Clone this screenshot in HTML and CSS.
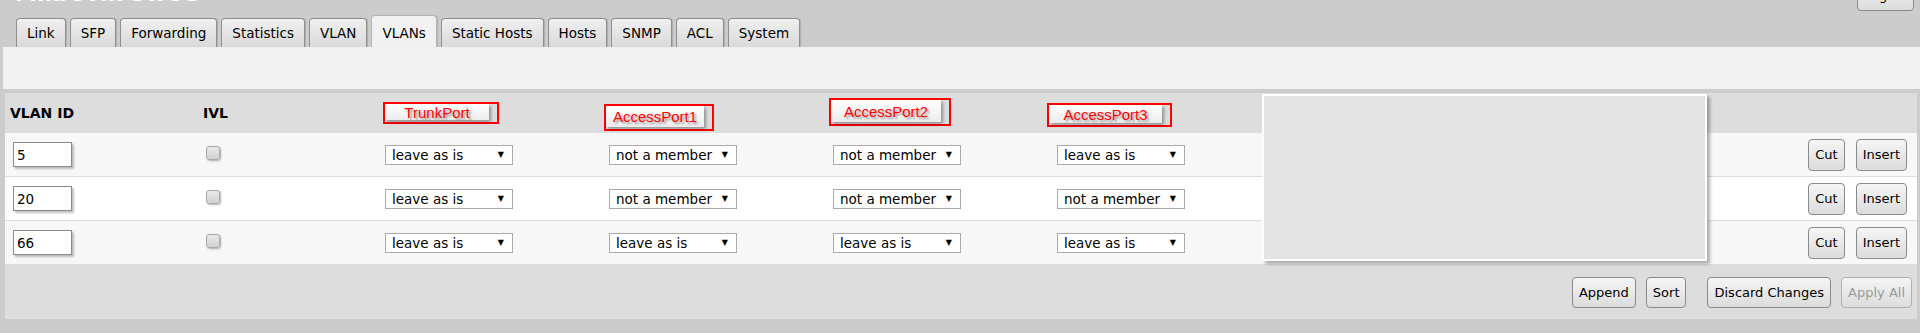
FILE: index.html
```html
<!DOCTYPE html>
<html lang="en">
<head>
    <meta charset="UTF-8">
    <meta name="viewport" content="width=device-width, initial-scale=1.0">
    <title>SwOS - VLANs</title>
    <link rel="stylesheet" href="styles.css">
</head>
<body>

    <!-- Header (page is scrolled a little) -->
    <div class="top">
        <span class="brand">MikroTik SwOS</span>
        <button class="btn logout">Logout</button>
    </div>

    <!-- Tabs -->
    <div class="tabs">
        <div class="tab">Link</div>
        <div class="tab">SFP</div>
        <div class="tab">Forwarding</div>
        <div class="tab">Statistics</div>
        <div class="tab">VLAN</div>
        <div class="tab active">VLANs</div>
        <div class="tab">Static Hosts</div>
        <div class="tab">Hosts</div>
        <div class="tab">SNMP</div>
        <div class="tab">ACL</div>
        <div class="tab">System</div>
    </div>

    <div class="toolbar"></div>

    <!-- VLAN table -->
    <div class="vlans">
        <div class="row head">
            <div class="cell">VLAN ID</div>
            <div class="cell">IVL</div>
            <div class="cell"><span class="port-label trunk"><span>TrunkPort</span></span></div>
            <div class="cell"><span class="port-label ap1"><span>AccessPort1</span></span></div>
            <div class="cell"><span class="port-label ap2"><span>AccessPort2</span></span></div>
            <div class="cell"><span class="port-label ap3"><span>AccessPort3</span></span></div>
            <div class="cell"></div>
        </div>

        <div class="row">
            <div class="cell"><input class="vid" type="text" value="5"></div>
            <div class="cell"><input class="check" type="checkbox"></div>
            <div class="cell"><div class="dropdown"><span>leave as is</span><span class="arrow">&#9660;</span></div></div>
            <div class="cell"><div class="dropdown"><span>not a member</span><span class="arrow">&#9660;</span></div></div>
            <div class="cell"><div class="dropdown"><span>not a member</span><span class="arrow">&#9660;</span></div></div>
            <div class="cell"><div class="dropdown"><span>leave as is</span><span class="arrow">&#9660;</span></div></div>
            <div class="cell actions"><button class="btn">Cut</button><button class="btn">Insert</button></div>
        </div>

        <div class="row">
            <div class="cell"><input class="vid" type="text" value="20"></div>
            <div class="cell"><input class="check" type="checkbox"></div>
            <div class="cell"><div class="dropdown"><span>leave as is</span><span class="arrow">&#9660;</span></div></div>
            <div class="cell"><div class="dropdown"><span>not a member</span><span class="arrow">&#9660;</span></div></div>
            <div class="cell"><div class="dropdown"><span>not a member</span><span class="arrow">&#9660;</span></div></div>
            <div class="cell"><div class="dropdown"><span>not a member</span><span class="arrow">&#9660;</span></div></div>
            <div class="cell actions"><button class="btn">Cut</button><button class="btn">Insert</button></div>
        </div>

        <div class="row">
            <div class="cell"><input class="vid" type="text" value="66"></div>
            <div class="cell"><input class="check" type="checkbox"></div>
            <div class="cell"><div class="dropdown"><span>leave as is</span><span class="arrow">&#9660;</span></div></div>
            <div class="cell"><div class="dropdown"><span>leave as is</span><span class="arrow">&#9660;</span></div></div>
            <div class="cell"><div class="dropdown"><span>leave as is</span><span class="arrow">&#9660;</span></div></div>
            <div class="cell"><div class="dropdown"><span>leave as is</span><span class="arrow">&#9660;</span></div></div>
            <div class="cell actions"><button class="btn">Cut</button><button class="btn">Insert</button></div>
        </div>

        <div class="footer">
            <button class="btn">Append</button>
            <button class="btn">Sort</button>
            <button class="btn wide-gap">Discard Changes</button>
            <button class="btn" disabled>Apply All</button>
        </div>

        <!-- blank popup lying over the table -->
        <div class="popup"></div>
    </div>

</body>
</html>
```

FILE: styles.css
```css
/* Global */
body {
    margin: 0;
    background: #cccccc;
    font-family: 'DejaVu Sans', Verdana, sans-serif;
    font-size: 13px;
    color: #000;
}

/* Header */
.top {
    height: 15px;
    display: flex;
    justify-content: space-between;
    align-items: flex-start;
    padding: 0 6px 0 15px;
}

.brand {
    margin-top: -17px;
    font-size: 22px;
    line-height: 22px;
    font-weight: bold;
    color: #ffffff;
}

.logout {
    margin-top: -21px;
    height: 30px;
    width: 57px;
}

/* Tabs */
.tabs {
    display: flex;
    align-items: flex-end;
    gap: 4px;
    height: 32px;
    padding-left: 16px;
}

.tab {
    height: 28px;
    line-height: 29px;
    padding: 0 10px;
    border: 1px solid #8f8f8f;
    border-bottom: none;
    border-radius: 4px 4px 0 0;
    background: linear-gradient(to bottom, #f0f0f0, #d9d9d9);
    box-shadow: 1px 0 1px rgba(0, 0, 0, 0.15);
    font-size: 13.5px;
}

.tab.active {
    height: 31px;
    line-height: 35px;
    background: #f1f1f1;
    border-color: #b5b5b5;
}

.toolbar {
    height: 42px;
    margin-left: 3px;
    background: #f1f1f1;
}

/* VLAN table */
.vlans {
    position: relative;
    margin: 4px 3px 14px 5px;
    background: #dddddd;
}

.row {
    display: grid;
    grid-template-columns: 193px 182px 224px 224px 224px 1fr auto;
    align-items: center;
    height: 43px;
    padding: 0 10px 0 5px;
    border-bottom: 1px solid #dddddd;
    background: #f7f7f7;
}

.row:nth-child(3) {
    background: #ffffff;
}

.row.head {
    height: 40px;
    border-bottom: none;
    background: #dddddd;
    font-size: 14px;
    font-weight: bold;
}

.vid {
    box-sizing: border-box;
    width: 59px;
    height: 25px;
    margin: 0 0 0 3px;
    padding: 0 3px;
    border: 1px solid #8a8a8a;
    box-shadow: 2px 2px 2px rgba(0, 0, 0, 0.25);
    font-family: inherit;
    font-size: 13.5px;
}

.check {
    appearance: none;
    width: 14px;
    height: 14px;
    margin: 0 0 0 3px;
    border: 1px solid #a8a8a8;
    border-radius: 3px;
    background: linear-gradient(to bottom, #e9e9e9, #d2d2d2);
    box-shadow: 1px 1px 2px rgba(0, 0, 0, 0.3);
}

.dropdown {
    box-sizing: border-box;
    width: 128px;
    height: 20px;
    display: flex;
    justify-content: space-between;
    align-items: center;
    padding: 0 8px 0 6px;
    border: 1px solid #a9a9a9;
    background: #ffffff;
    font-size: 13.5px;
}

.dropdown .arrow {
    font-size: 8px;
}

/* Annotated header labels */
.port-label {
    box-sizing: border-box;
    display: flex;
    align-self: start;
    border: 2px solid #ff0000;
    font-family: 'Liberation Sans', Arial, sans-serif;
    font-size: 15px;
    font-weight: normal;
    color: #ff0000;
}

.port-label span {
    flex: 1;
    display: flex;
    align-items: center;
    justify-content: center;
    margin: 0 8px 2px 0;
    background: linear-gradient(to bottom, #ffffff, #ececec);
    box-shadow: 2px 2px 3px rgba(0, 0, 0, 0.35);
    text-shadow: 2px 2px 2px rgba(0, 0, 0, 0.35);
}

.head .cell:nth-child(n+3) {
    align-self: start;
}

.trunk { width: 116px; height: 22px; margin: 9px 0 0 -2px; }
.ap1   { width: 110px; height: 27px; margin: 11px 0 0 -5px; }
.ap2   { width: 122px; height: 28px; margin: 5px 0 0 -4px; }
.ap3   { width: 125px; height: 24px; margin: 10px 0 0 -10px; }

/* Buttons */
.btn {
    height: 32px;
    padding: 0 6px;
    border: 1px solid #8a8a8a;
    border-radius: 4px;
    background: linear-gradient(to bottom, #f5f5f5, #dcdcdc);
    font-family: 'DejaVu Sans', Verdana, sans-serif;
    font-size: 13px;
    color: #000;
}

.btn:disabled {
    color: #9a9a9a;
    border-color: #b0b0b0;
}

.actions {
    display: flex;
    gap: 11px;
}

.footer {
    display: flex;
    justify-content: flex-end;
    gap: 10px;
    height: 42px;
    padding: 12px 5px 0 0;
}

.footer .btn {
    height: 31px;
}

.footer .wide-gap {
    margin-left: 11px;
}

.popup {
    position: absolute;
    left: 1257px;
    top: 1px;
    box-sizing: border-box;
    width: 445px;
    height: 167px;
    border: 2px solid #ffffff;
    background: #e3e3e3;
    box-shadow: 3px 3px 3px rgba(0, 0, 0, 0.3);
}
```
